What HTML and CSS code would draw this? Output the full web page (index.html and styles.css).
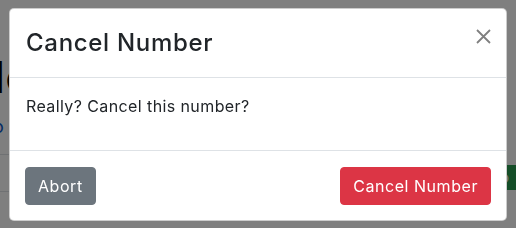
FILE: index.html
```html
<!DOCTYPE html>
<html lang="en">
<head>
<meta charset="utf-8">
<title>Cancel Number</title>
<link rel="stylesheet" href="styles.css">
</head>
<body>
<div class="page">
  <div class="page-main">
    <h1 class="page-title">No</h1>
    <a class="page-link" href="#">Do</a>
    <div class="page-row"></div>
    <div class="page-row page-row-tall"></div>
  </div>
  <div class="page-side">
    <span class="page-btn">Do</span>
  </div>
</div>
<div class="backdrop"></div>
<div class="modal" role="dialog">
  <div class="modal-header">
    <h5 class="modal-title">Cancel Number</h5>
    <button class="close" type="button" aria-label="Close">
      <svg width="15" height="15" viewBox="0 0 15 15"><path d="M1 1L14 14M14 1L1 14" stroke="#808080" stroke-width="1.8" fill="none"/></svg>
    </button>
  </div>
  <div class="modal-body">
    <p class="modal-text">Really? Cancel this number?</p>
  </div>
  <div class="modal-footer">
    <button class="btn btn-secondary" type="button">Abort</button>
    <button class="btn btn-danger" type="button">Cancel Number</button>
  </div>
</div>
</body>
</html>
```
FILE: styles.css
```css
* { box-sizing: border-box; }
html, body { margin: 0; padding: 0; }
body {
  width: 516px;
  height: 228px;
  overflow: hidden;
  background: #ffffff;
  font-family: Inter, "Open Sans", sans-serif;
  color: #212529;
}
.page {
  display: flex;
  justify-content: space-between;
  height: 228px;
}
.page-main {
  display: flex;
  flex-direction: column;
  margin-left: -28px;
  width: 200px;
  padding-top: 52px;
}
.page-title {
  margin: 0;
  font-size: 44px;
  line-height: 50px;
  font-weight: 500;
  color: #000;
}
.page-link {
  margin-top: 14px;
  color: #0d58c8;
  font-size: 18px;
  text-decoration: none;
  line-height: 22px;
  padding-left: 8px;
}
.page-row {
  margin-top: 16px;
  border-top: 1px solid #dee2e6;
  height: 50px;
}
.page-row-tall {
  margin-top: 0;
}
.page-side {
  padding-top: 165px;
}
.page-btn {
  display: block;
  width: 30px;
  height: 25px;
  background: #2a9d50;
  color: #fff;
  font-size: 16px;
  line-height: 25px;
  padding-left: 2px;
}
.backdrop {
  position: fixed;
  inset: 0;
  background: rgba(0, 0, 0, 0.5);
}
.modal {
  position: fixed;
  left: 9px;
  top: 8px;
  width: 498px;
  background: #fff;
  border: 1px solid rgba(0, 0, 0, 0.2);
  border-radius: 5px;
  display: flex;
  flex-direction: column;
}
.modal-header {
  display: flex;
  align-items: flex-start;
  justify-content: space-between;
  padding: 16px 15px 16px 16px;
  border-bottom: 1px solid #dee2e6;
}
.modal-title {
  margin: 0;
  font-size: 24px;
  line-height: 36px;
  font-weight: 500;
  letter-spacing: 0.7px;
  color: #212529;
}
.close {
  border: 0;
  background: transparent;
  padding: 0;
  width: 15px;
  height: 15px;
  display: flex;
  margin-top: 4px;
}
.modal-body {
  padding: 16px;
}
.modal-text {
  margin: 0 0 16px;
  font-size: 16px;
  line-height: 24px;
  letter-spacing: 0.4px;
  color: #212529;
}
.modal-footer {
  display: flex;
  justify-content: space-between;
  align-items: center;
  padding: 16px 15px 15px 15px;
  border-top: 1px solid #dee2e6;
}
.btn {
  font-family: inherit;
  font-size: 16px;
  line-height: 24px;
  letter-spacing: 0.55px;
  padding: 6px 12px;
  border: 1px solid transparent;
  border-radius: 4px;
  color: #fff;
}
.btn-secondary {
  background: #6c757d;
  border-color: #6c757d;
}
.btn-danger {
  background: #dc3545;
  border-color: #dc3545;
}
```
